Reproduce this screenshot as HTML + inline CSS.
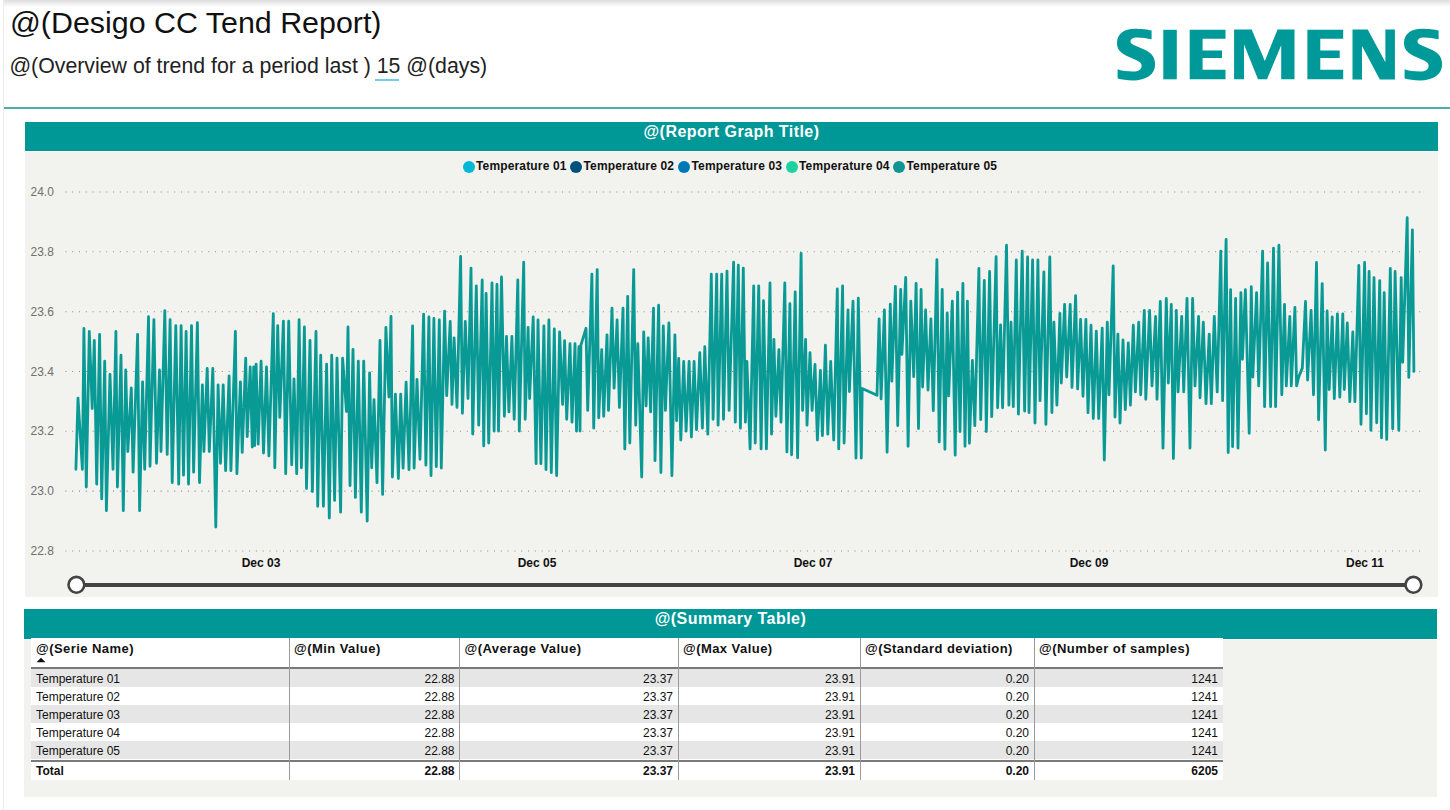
<!DOCTYPE html>
<html><head><meta charset="utf-8"><style>
*{margin:0;padding:0;box-sizing:border-box}
html,body{width:1450px;height:810px;overflow:hidden;background:#fff;font-family:"Liberation Sans",sans-serif;position:relative}
.abs{position:absolute}
.title{left:10px;top:3.5px;font-size:30.4px;line-height:36px;color:#111;white-space:nowrap}
.sub{left:9.5px;top:53px;font-size:21.3px;line-height:26px;color:#222;white-space:nowrap}
.u{position:absolute;left:375px;top:79px;width:24px;height:2px;background:#6dd0ea}
.hline{left:4px;top:107.3px;width:1446px;height:2.2px;background:#50adad}
.vline{left:3px;top:0;width:1px;height:810px;background:#ececec}
.shadow{left:4px;top:0;width:1446px;height:7px;background:linear-gradient(#dedede,#fff)}
.bar{background:#009797;color:#fff;font-weight:bold;font-size:16px;letter-spacing:0.45px;text-align:center;white-space:nowrap}
.body{background:#f2f2ee}
.leg{top:159px;font-size:12px;font-weight:bold;letter-spacing:0.15px;line-height:14px;color:#111;white-space:nowrap}
.dot{position:absolute;width:12px;height:12px;border-radius:50%}
.yl{font-size:12px;color:#707070;width:30px;line-height:14px}
.xl{font-size:12px;font-weight:bold;color:#111;line-height:14px;width:60px;text-align:center}
table{border-collapse:collapse;table-layout:fixed}
.tbl{left:31px;top:638px;width:1192px;background:#fff}
.th{font-weight:bold;font-size:13px;letter-spacing:0.45px;color:#111;line-height:16px;white-space:nowrap}
.td{font-size:12px;color:#111;line-height:18px;white-space:nowrap}
.b{font-weight:bold}
</style></head><body>
<div class="abs shadow"></div>
<div class="abs vline"></div>
<div class="abs title">@(Desigo CC Tend Report)</div>
<div class="abs sub">@(Overview of trend for a period last ) 15 @(days)</div>
<div class="u"></div>
<svg class="abs" style="left:0;top:0" width="1450" height="100"><g fill="#009999"><path d="M1151.6 30.6 C1148 29.5 1140 28.8 1135 28.8 C1124 28.8 1117 34 1117 43 C1117 50 1121 53 1128 56.5 L1137 60.5 C1140.5 62 1141.6 63.5 1141.6 66 C1141.6 69.5 1138.5 71.5 1133 71.5 C1127 71.5 1121 70.5 1117.6 69.2 L1117.6 78.6 C1121.5 79.8 1127 80.4 1133 80.4 C1146 80.4 1155.1 74.5 1155.1 64.5 C1155.1 56.5 1151 52.5 1143 49 L1135 45.5 C1131.5 44 1130.5 42.8 1130.5 41.5 C1130.5 39 1133 37.5 1137 37.5 C1142 37.5 1147.5 38.5 1151.6 39.3 Z"/><path d="M1163.3 29.8 H1176.8 V79.3 H1163.3 Z"/><path d="M1189.7 29.8 H1225.5 V38.8 H1202.6 V50.5 H1222 V58.1 H1202.6 V69.8 H1225.5 V79.3 H1189.7 Z"/><path d="M1234.1 29.6 H1251.7 L1264.8 61 L1277.5 29.6 H1294.5 V79.3 H1281.2 V45.2 L1267 79.3 H1258 L1244 44.6 V79.3 H1234.1 Z"/><path d="M1189.7 29.8 H1225.5 V38.8 H1202.6 V50.5 H1222 V58.1 H1202.6 V69.8 H1225.5 V79.3 H1189.7 Z" transform="translate(117.7,0)"/><path d="M1352.5 29.6 H1367.7 L1385.4 62.3 V29.6 H1394.9 V79.4 H1379.8 L1362 45.9 V79.4 H1352.5 Z"/><path d="M1151.6 30.6 C1148 29.5 1140 28.8 1135 28.8 C1124 28.8 1117 34 1117 43 C1117 50 1121 53 1128 56.5 L1137 60.5 C1140.5 62 1141.6 63.5 1141.6 66 C1141.6 69.5 1138.5 71.5 1133 71.5 C1127 71.5 1121 70.5 1117.6 69.2 L1117.6 78.6 C1121.5 79.8 1127 80.4 1133 80.4 C1146 80.4 1155.1 74.5 1155.1 64.5 C1155.1 56.5 1151 52.5 1143 49 L1135 45.5 C1131.5 44 1130.5 42.8 1130.5 41.5 C1130.5 39 1133 37.5 1137 37.5 C1142 37.5 1147.5 38.5 1151.6 39.3 Z" transform="translate(287,0)"/></g></svg>
<div class="abs hline"></div>
<div class="abs body" style="left:25px;top:152px;width:1413px;height:445px"></div>
<div class="abs bar" style="left:25px;top:122px;width:1413px;height:29px;line-height:20px">@(Report Graph Title)</div>
<div class="abs dot" style="left:462.5px;top:160.5px;background:#00b8d6"></div><div class="abs leg" style="left:476.0px">Temperature 01</div><div class="abs dot" style="left:570px;top:160.5px;background:#00507f"></div><div class="abs leg" style="left:583.5px">Temperature 02</div><div class="abs dot" style="left:678px;top:160.5px;background:#0078b8"></div><div class="abs leg" style="left:691.5px">Temperature 03</div><div class="abs dot" style="left:785.5px;top:160.5px;background:#1dd1a1"></div><div class="abs leg" style="left:799.0px">Temperature 04</div><div class="abs dot" style="left:893px;top:160.5px;background:#0e9594"></div><div class="abs leg" style="left:906.5px">Temperature 05</div>
<div class="abs yl" style="left:30.5px;top:185.0px">24.0</div><div class="abs yl" style="left:30.5px;top:244.8px">23.8</div><div class="abs yl" style="left:30.5px;top:304.7px">23.6</div><div class="abs yl" style="left:30.5px;top:364.5px">23.4</div><div class="abs yl" style="left:30.5px;top:424.3px">23.2</div><div class="abs yl" style="left:30.5px;top:484.1px">23.0</div><div class="abs yl" style="left:30.5px;top:544.0px">22.8</div>
<svg class="abs" style="left:0;top:0" width="1450" height="810">
<line x1="65.4" y1="192.0" x2="1421" y2="192.0" stroke="#8a8a8a" stroke-width="1.1" stroke-dasharray="1 5.803"/><line x1="65.4" y1="251.8" x2="1421" y2="251.8" stroke="#8a8a8a" stroke-width="1.1" stroke-dasharray="1 5.803"/><line x1="65.4" y1="311.7" x2="1421" y2="311.7" stroke="#8a8a8a" stroke-width="1.1" stroke-dasharray="1 5.803"/><line x1="65.4" y1="371.5" x2="1421" y2="371.5" stroke="#8a8a8a" stroke-width="1.1" stroke-dasharray="1 5.803"/><line x1="65.4" y1="431.3" x2="1421" y2="431.3" stroke="#8a8a8a" stroke-width="1.1" stroke-dasharray="1 5.803"/><line x1="65.4" y1="491.1" x2="1421" y2="491.1" stroke="#8a8a8a" stroke-width="1.1" stroke-dasharray="1 5.803"/><line x1="65.4" y1="551.0" x2="1421" y2="551.0" stroke="#8a8a8a" stroke-width="1.1" stroke-dasharray="1 5.803"/>
<polyline points="75.9,469.3 78.0,398.1 82.4,469.3 83.9,328.5 86.3,487.0 89.3,331.5 92.2,408.5 94.3,340.4 96.7,484.1 99.6,334.4 101.7,498.9 104.7,361.1 106.4,510.7 110.0,374.4 113.0,469.3 115.9,331.5 117.4,487.0 121.0,355.2 123.3,510.7 125.7,370.0 127.8,451.5 131.3,387.8 133.1,472.2 137.6,334.4 139.6,510.7 142.6,381.9 144.7,469.3 148.5,316.7 150.0,466.3 153.9,319.6 156.5,463.3 159.5,370.0 161.0,451.5 164.8,310.7 167.2,454.4 170.1,319.6 172.2,482.6 175.8,325.6 178.7,484.1 181.1,325.6 183.5,475.2 186.1,331.5 188.5,484.1 191.5,325.6 193.6,472.2 197.4,322.6 199.5,482.6 202.4,384.8 203.9,451.5 207.2,368.5 209.3,451.5 212.8,368.5 215.8,527.0 218.1,384.8 220.5,463.3 223.2,384.8 225.6,470.7 229.1,375.9 230.9,470.7 235.4,331.5 236.9,473.7 240.4,381.9 242.2,452.4 245.7,358.1 247.2,436.7 250.2,367.0 252.3,447.0 253.7,367.0 254.6,445.6 256.1,364.1 258.2,444.1 261.1,361.1 263.5,453.0 266.5,367.0 268.9,455.9 273.3,313.7 274.8,467.8 277.7,325.6 279.8,417.4 283.4,321.1 285.7,473.7 288.7,321.1 291.7,464.8 294.0,378.9 296.7,473.7 299.1,319.6 301.4,467.8 304.4,327.0 306.5,488.5 310.0,340.4 312.4,491.5 316.0,331.5 317.7,506.3 320.7,355.2 323.4,506.3 326.6,364.1 329.3,518.1 331.7,355.2 334.6,500.4 337.0,358.1 340.6,512.2 342.6,358.1 346.5,411.5 348.0,327.0 350.0,485.6 353.0,349.3 355.4,497.4 358.3,361.1 361.3,512.2 363.7,361.1 367.2,521.1 369.6,373.0 371.7,467.8 374.0,399.6 377.0,482.6 380.0,340.4 382.6,494.4 385.9,327.4 388.9,397.0 391.0,316.4 392.4,477.0 395.4,394.1 398.4,478.5 400.7,394.1 403.1,468.1 406.1,382.2 409.0,469.6 412.6,325.9 414.1,468.1 417.0,379.3 420.0,459.3 423.6,314.1 425.9,465.2 428.9,317.0 431.0,475.6 433.9,318.5 436.3,466.7 439.3,320.0 441.3,468.1 444.6,311.1 446.7,395.6 450.2,321.5 452.0,404.4 454.1,337.8 457.0,407.4 460.6,256.3 462.4,413.3 465.3,321.5 468.0,398.5 471.0,268.1 472.7,434.1 476.3,285.9 478.7,425.2 482.2,280.0 483.7,445.9 486.1,293.3 488.7,443.0 492.0,283.0 494.1,431.1 497.0,284.4 498.5,431.1 501.5,277.0 504.4,416.3 506.5,336.3 508.9,411.9 511.9,336.3 514.2,419.3 517.8,280.0 519.3,431.1 523.7,262.2 525.2,419.3 528.1,327.4 529.6,398.5 533.2,317.0 536.1,463.7 538.0,320.0 540.9,463.7 543.9,325.9 546.0,469.6 548.9,320.0 551.3,472.6 554.3,328.9 556.6,475.6 559.6,331.9 562.6,404.4 564.6,340.7 566.7,419.3 570.0,343.7 572.0,422.2 575.0,343.7 576.5,431.1 578.9,346.7 580.0,431.1 580.9,345.2 586.0,328.3 587.7,410.4 591.9,274.1 593.7,428.1 597.2,269.6 598.7,417.8 601.7,349.6 603.7,416.3 607.0,334.8 608.5,410.4 612.0,308.1 614.1,388.1 617.1,320.0 619.4,407.4 623.0,308.1 624.8,448.9 627.7,296.3 629.8,443.0 633.7,269.6 635.7,425.2 637.8,343.7 641.7,477.0 643.7,331.9 646.1,405.9 648.2,337.8 650.6,411.9 653.5,308.1 655.0,460.7 658.6,305.2 660.9,472.6 663.3,325.9 665.4,410.4 668.9,323.0 671.9,475.6 674.9,334.8 676.6,420.7 678.7,358.5 680.8,440.0 683.7,361.5 686.1,431.1 689.1,361.5 691.4,437.0 694.1,361.5 696.5,429.6 699.8,352.6 702.4,428.1 704.8,346.7 707.8,434.1 711.3,274.1 713.1,419.3 716.7,274.1 718.1,425.2 721.7,274.1 723.5,419.3 727.0,271.1 729.1,410.4 733.6,262.2 735.3,422.2 738.3,265.2 740.4,428.1 743.3,268.1 745.4,422.2 746.9,361.5 750.1,448.9 753.7,285.9 755.2,443.0 758.7,285.9 761.1,448.9 763.5,300.7 766.4,448.9 770.0,283.0 771.5,434.1 773.9,339.3 775.9,416.3 778.9,349.6 781.0,422.2 784.8,283.0 786.9,451.9 789.9,303.7 791.6,454.8 795.2,291.9 797.6,457.8 801.1,253.3 802.6,410.4 805.6,339.3 807.0,425.2 810.0,352.6 812.1,410.4 815.0,364.4 817.4,440.0 820.4,370.4 822.4,435.6 825.4,345.2 827.8,434.1 830.7,361.5 833.7,440.0 837.3,288.9 838.7,448.9 842.6,285.9 844.1,443.0 848.0,310.0 849.4,391.5 853.0,301.1 856.0,458.1 858.3,298.1 861.3,458.1 862.2,388.5 877.0,395.3 879.1,318.9 881.1,398.9 884.4,310.0 887.1,452.2 890.3,304.1 891.8,381.1 895.4,286.3 897.7,425.6 900.7,289.3 901.9,354.4 905.7,277.4 908.1,446.3 910.8,301.1 913.7,376.7 916.1,283.3 918.5,428.5 921.1,289.3 922.6,387.0 925.6,310.0 928.0,390.0 930.9,318.9 933.3,410.7 936.9,259.6 939.2,441.9 942.2,289.3 944.9,449.3 947.2,313.0 948.7,395.9 952.3,301.1 955.2,455.2 957.6,292.2 960.0,431.5 962.9,283.3 965.0,446.3 967.4,301.1 969.4,443.3 972.4,360.4 974.8,425.6 978.9,268.5 980.7,419.6 984.3,280.4 986.3,431.5 989.6,271.5 991.7,416.7 996.1,256.7 997.6,407.8 1000.6,324.8 1002.6,407.8 1006.5,245.2 1008.9,405.2 1011.0,322.2 1013.3,406.7 1016.3,260.0 1018.4,414.1 1022.2,251.1 1024.6,411.1 1027.6,257.0 1029.0,412.6 1032.6,260.0 1035.0,423.0 1037.9,260.0 1040.0,400.7 1043.9,271.9 1045.9,424.4 1049.8,257.0 1051.9,412.6 1053.9,322.2 1056.9,405.2 1059.9,313.3 1061.3,383.0 1064.6,304.4 1066.7,377.0 1070.2,304.4 1072.0,387.4 1075.6,295.6 1077.6,388.9 1080.6,319.3 1083.0,396.3 1085.9,319.3 1088.0,412.6 1091.0,325.2 1093.3,418.5 1096.3,331.1 1098.7,418.5 1102.2,328.1 1104.3,460.0 1107.3,322.2 1109.0,394.8 1113.2,265.9 1115.0,417.0 1117.9,334.1 1120.0,423.0 1123.0,340.0 1125.3,409.6 1128.3,343.0 1130.4,405.2 1133.3,325.2 1135.4,391.9 1138.7,322.2 1140.7,394.8 1144.3,310.4 1145.8,399.3 1149.6,310.4 1152.0,385.9 1155.6,316.3 1157.0,399.3 1160.3,301.5 1163.0,448.1 1166.3,298.5 1168.3,383.0 1171.3,304.4 1173.4,458.5 1176.3,310.4 1178.1,391.9 1181.7,316.3 1183.7,391.9 1187.0,298.5 1190.0,448.1 1192.6,298.5 1195.0,385.9 1198.6,316.3 1200.0,397.8 1203.3,322.2 1206.0,403.7 1209.2,334.1 1211.3,403.7 1214.3,316.3 1217.2,391.9 1220.8,251.1 1222.6,400.7 1226.1,239.3 1228.2,452.6 1230.6,289.6 1232.6,446.7 1235.6,298.5 1238.0,448.1 1240.9,292.6 1242.4,359.3 1245.4,289.6 1249.2,433.3 1251.3,286.7 1252.8,377.0 1256.6,292.6 1258.7,385.9 1262.6,251.1 1264.6,406.7 1267.6,263.0 1270.6,406.7 1273.5,248.1 1275.6,406.7 1278.9,245.2 1281.8,394.8 1284.5,304.4 1286.3,385.9 1289.8,316.3 1291.3,385.9 1294.9,307.4 1296.6,385.9 1298.7,377.0 1302.3,368.1 1305.5,301.5 1307.6,380.0 1311.1,310.4 1313.5,394.8 1316.5,262.5 1318.6,419.8 1322.2,283.6 1325.3,450.0 1327.1,310.9 1329.2,389.5 1332.2,316.9 1334.3,398.6 1337.4,313.9 1339.8,397.1 1342.8,313.9 1344.3,389.5 1347.3,323.0 1349.8,401.6 1352.8,332.0 1354.9,401.6 1358.8,265.5 1361.0,424.3 1364.6,262.5 1366.4,413.7 1369.1,271.5 1370.9,430.3 1374.0,277.6 1376.7,422.8 1379.7,280.6 1381.5,437.9 1384.2,292.7 1386.7,439.4 1390.3,268.5 1392.7,428.8 1395.1,271.5 1398.8,430.3 1401.2,277.6 1402.7,362.3 1407.2,217.7 1408.8,377.4 1412.4,229.8 1413.9,371.4" fill="none" stroke="#0a9a96" stroke-width="2.8" stroke-linejoin="round" stroke-linecap="round"/>
<line x1="76.4" y1="585" x2="1413.4" y2="585" stroke="#444" stroke-width="4"/>
<circle cx="76.4" cy="584.8" r="7.9" fill="#fff" stroke="#444" stroke-width="2.6"/>
<circle cx="1413.4" cy="584.8" r="7.9" fill="#fff" stroke="#444" stroke-width="2.6"/>
</svg>
<div class="abs xl" style="left:231px;top:556px">Dec 03</div><div class="abs xl" style="left:507px;top:556px">Dec 05</div><div class="abs xl" style="left:783px;top:556px">Dec 07</div><div class="abs xl" style="left:1059px;top:556px">Dec 09</div><div class="abs xl" style="left:1335px;top:556px">Dec 11</div>
<div class="abs bar" style="left:24px;top:609px;width:1413px;height:29.8px;line-height:20px">@(Summary Table)</div>
<div class="abs body" style="left:24px;top:639.5px;width:1413px;height:157.5px"></div>
<div class="abs" style="left:31px;top:638px;width:1192px;height:142px;background:#fff"></div><div class="abs th" style="left:36px;top:641px">@(Serie Name)</div><div class="abs th" style="left:294px;top:641px">@(Min Value)</div><div class="abs th" style="left:464.5px;top:641px">@(Average Value)</div><div class="abs th" style="left:683px;top:641px">@(Max Value)</div><div class="abs th" style="left:865px;top:641px">@(Standard deviation)</div><div class="abs th" style="left:1039px;top:641px">@(Number of samples)</div><svg class="abs" style="left:0;top:0" width="60" height="700"><path d="M36.5 662.3 L41 657.8 L45.5 662.3 Z" fill="#111"/></svg><div class="abs" style="left:31px;top:667px;width:1192px;height:2px;background:#7a7a7a"></div><div class="abs" style="left:31px;top:669px;width:1192px;height:18px;background:#e6e6e6"></div><div class="abs td" style="left:36px;top:669.5px">Temperature 01</div><div class="abs td" style="right:995.5px;top:669.5px">22.88</div><div class="abs td" style="right:777px;top:669.5px">23.37</div><div class="abs td" style="right:595px;top:669.5px">23.91</div><div class="abs td" style="right:421px;top:669.5px">0.20</div><div class="abs td" style="right:232px;top:669.5px">1241</div><div class="abs" style="left:31px;top:687px;width:1192px;height:18px;background:#fff"></div><div class="abs td" style="left:36px;top:687.5px">Temperature 02</div><div class="abs td" style="right:995.5px;top:687.5px">22.88</div><div class="abs td" style="right:777px;top:687.5px">23.37</div><div class="abs td" style="right:595px;top:687.5px">23.91</div><div class="abs td" style="right:421px;top:687.5px">0.20</div><div class="abs td" style="right:232px;top:687.5px">1241</div><div class="abs" style="left:31px;top:705px;width:1192px;height:18px;background:#e6e6e6"></div><div class="abs td" style="left:36px;top:705.5px">Temperature 03</div><div class="abs td" style="right:995.5px;top:705.5px">22.88</div><div class="abs td" style="right:777px;top:705.5px">23.37</div><div class="abs td" style="right:595px;top:705.5px">23.91</div><div class="abs td" style="right:421px;top:705.5px">0.20</div><div class="abs td" style="right:232px;top:705.5px">1241</div><div class="abs" style="left:31px;top:723px;width:1192px;height:18px;background:#fff"></div><div class="abs td" style="left:36px;top:723.5px">Temperature 04</div><div class="abs td" style="right:995.5px;top:723.5px">22.88</div><div class="abs td" style="right:777px;top:723.5px">23.37</div><div class="abs td" style="right:595px;top:723.5px">23.91</div><div class="abs td" style="right:421px;top:723.5px">0.20</div><div class="abs td" style="right:232px;top:723.5px">1241</div><div class="abs" style="left:31px;top:741px;width:1192px;height:18px;background:#e6e6e6"></div><div class="abs td" style="left:36px;top:741.5px">Temperature 05</div><div class="abs td" style="right:995.5px;top:741.5px">22.88</div><div class="abs td" style="right:777px;top:741.5px">23.37</div><div class="abs td" style="right:595px;top:741.5px">23.91</div><div class="abs td" style="right:421px;top:741.5px">0.20</div><div class="abs td" style="right:232px;top:741.5px">1241</div><div class="abs" style="left:31px;top:759.7px;width:1192px;height:2px;background:#7a7a7a"></div><div class="abs td b" style="left:36px;top:762.2px">Total</div><div class="abs td b" style="right:995.5px;top:762.2px">22.88</div><div class="abs td b" style="right:777px;top:762.2px">23.37</div><div class="abs td b" style="right:595px;top:762.2px">23.91</div><div class="abs td b" style="right:421px;top:762.2px">0.20</div><div class="abs td b" style="right:232px;top:762.2px">6205</div><div class="abs" style="left:288.5px;top:638px;width:1.2px;height:142px;background:#9a9a9a"></div><div class="abs" style="left:459.0px;top:638px;width:1.2px;height:142px;background:#9a9a9a"></div><div class="abs" style="left:677.5px;top:638px;width:1.2px;height:142px;background:#9a9a9a"></div><div class="abs" style="left:859.5px;top:638px;width:1.2px;height:142px;background:#9a9a9a"></div><div class="abs" style="left:1033.5px;top:638px;width:1.2px;height:142px;background:#9a9a9a"></div>
</body></html>
